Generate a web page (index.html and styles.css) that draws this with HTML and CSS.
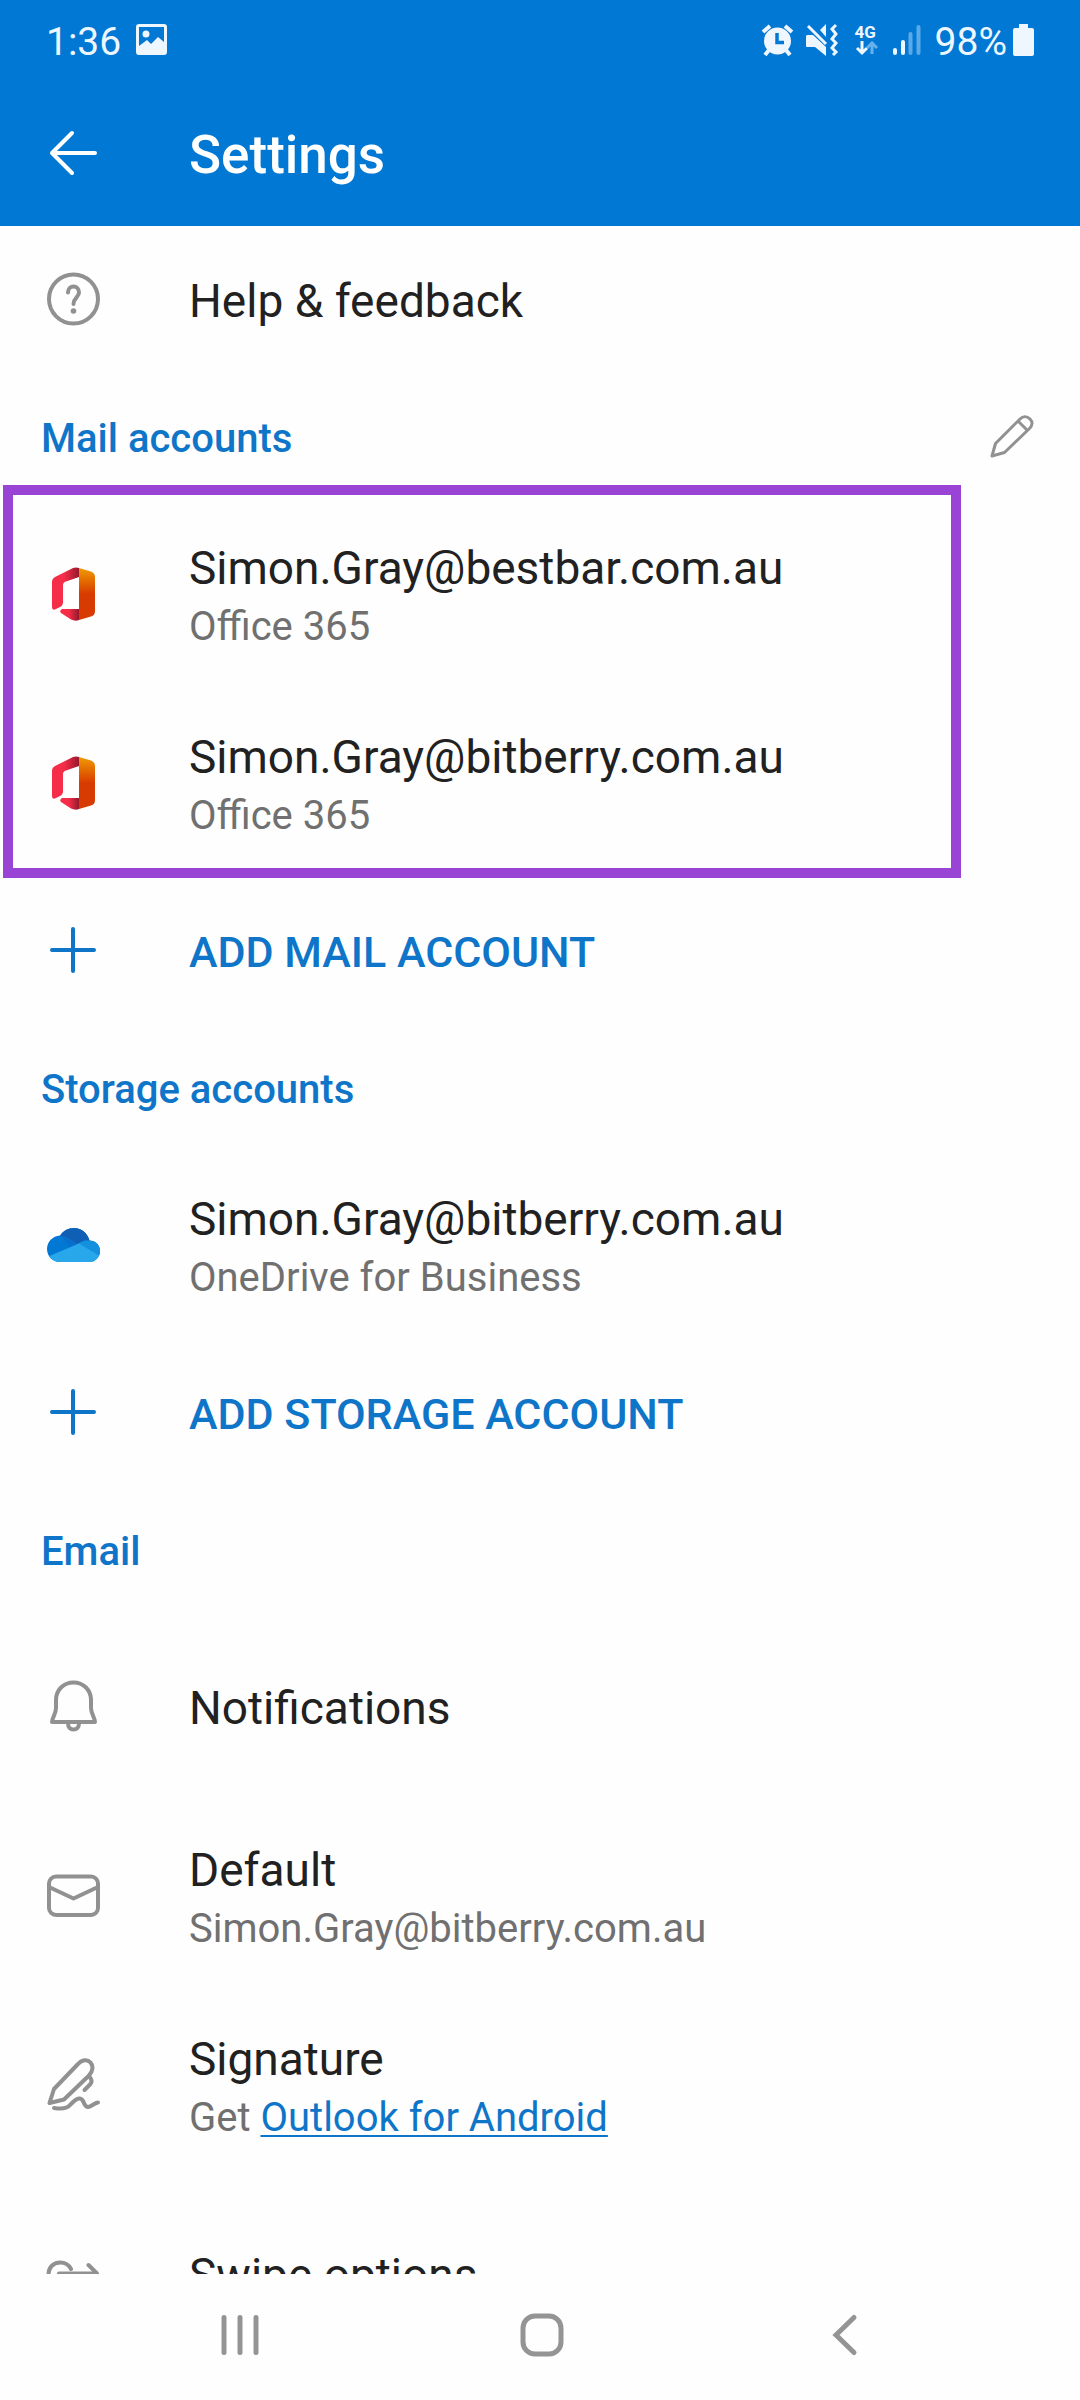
FILE: index.html
```html
<!DOCTYPE html>
<html lang="en">
  <head>
    <meta charset="utf-8">
    <title>Settings</title>
    <link rel="stylesheet" href="styles.css">
  </head>
  <body>
    <header class="header">
      <div class="status">
        <span>1:36</span>
        <svg class="status-picture" width="32" height="32" viewBox="0 0 32 32">
          <path fill="#eef6ff" fill-rule="evenodd" d="M4 0H28Q31 0 31 3V28Q31 31 28 31H3Q0 31 0 28V3Q0 0 3 0ZM3 3V22L11 16L15 20L22 13L28 18V3Z" />
          <circle cx="10" cy="10" r="3.5" fill="#eef6ff" />
        </svg>
        <div class="status-right">
          <svg width="33" height="34" viewBox="0 0 33 34">
            <g stroke="#eef6ff" stroke-width="4" fill="none">
              <path d="M2 9L9 3M24 3L31 9M8 27L4 32M25 27L29 32" />
            </g>
            <circle cx="16.5" cy="18" r="13.5" fill="#eef6ff" />
            <path d="M16 10V19.500H23" fill="none" stroke="#0078d4" stroke-width="3.500" />
          </svg>
          <svg class="status-mute" width="33" height="34" viewBox="0 0 33 34">
            <path fill="#eef6ff" d="M1 12H7L20 24V33L9 24H1Q0 24 0 23V13ZM14 7L20 1V14Z" />
            <path d="M2 3L20 21" stroke="#eef6ff" stroke-width="3" />
            <path d="M30 2L26 6L30 11L26 16L30 20L26 25L30 29L27 32" fill="none" stroke="#eef6ff" stroke-width="3" />
          </svg>
          <div class="network">
            <span>4G</span>
            <svg width="24" height="15" viewBox="0 0 24 15">
              <path d="M7 0V12M2 7L7 12L12 7" fill="none" stroke="#eef6ff" stroke-width="3" />
              <path d="M17 13V1M12 7L17 2L22 7" fill="none" stroke="#66b0ec" stroke-width="3" />
            </svg>
          </div>
          <svg class="status-signal" width="28" height="32" viewBox="0 0 28 32" stroke-width="4" stroke-linecap="round">
            <path d="M2 26V29M10 18V29" stroke="#eef6ff" />
            <path d="M17.500 10V29M25.500 3V29" stroke="#5aa9e8" />
          </svg>
          <span>98%</span>
          <svg class="status-battery" width="21" height="34" viewBox="0 0 21 34">
            <path fill="#eef6ff" d="M6 1H15V5H19Q21 5 21 7V31Q21 33 19 33H2Q0 33 0 31V7Q0 5 2 5H6Z" />
          </svg>
        </div>
      </div>
      <div class="toolbar">
        <button class="back" aria-label="Back">
          <svg class="icon" viewBox="0 0 66 66">
            <path d="M12 33H55M32 13L12 33L32 53" />
          </svg>
        </button>
        <h1>Settings</h1>
      </div>
    </header>

    <main class="content">
      <button class="row short">
        <svg class="icon" viewBox="0 0 66 66">
          <circle cx="33.5" cy="33" r="24.5" />
          <path d="M28 26.500C28 23 30.500 20.500 33.500 20.500S39 23 39 26.500C39 31 33.500 32 33.500 38" />
          <circle class="dot" cx="33.5" cy="45" r="2.8" />
        </svg>
        <span class="single">Help &amp; feedback</span>
      </button>

      <div class="section">
        <h2>Mail accounts</h2>
        <button class="edit" aria-label="Edit mail accounts">
          <svg width="48" height="48" viewBox="0 0 48 48">
            <path d="M4 44L7.500 31.500L32 7C35 4 39 4 42 7S44.500 13.500 41.500 16.500L16.500 40.500ZM30 9L39 18" />
          </svg>
        </button>
      </div>

      <div class="accounts">
        <button class="row">
          <svg class="icon logo" viewBox="0 0 66 66">
            <defs>
              <linearGradient id="orange" x1="0" y1="0" x2="0" y2="1">
                <stop offset="0" stop-color="#f09a00" />
                <stop offset="0.5" stop-color="#d83b01" />
                <stop offset="1" stop-color="#d83b01" />
              </linearGradient>
              <linearGradient id="red" x1="0" y1="0" x2="1" y2="0">
                <stop offset="0.45" stop-color="#f52d48" />
                <stop offset="1" stop-color="#96182c" />
              </linearGradient>
            </defs>
            <g id="office">
              <path fill="url(#red)" d="M39 7Q36 6 33 7L15 16Q12 17.500 12 21V46Q12 50 16 48L20 46Q23 44.500 23 41V24Q23 21.500 26 20.500L39 16Z" />
              <path fill="url(#red)" d="M39 48H22Q19 50 21 52L31 58.500Q35 60.500 39 59Z" />
              <path fill="url(#orange)" d="M39 7L51 10.500Q55 12 55 16V50Q55 54.500 51 55.500L39 59Z" />
            </g>
          </svg>
          <span class="text">
            <span class="title">Simon.Gray@bestbar.com.au</span>
            <span class="sub">Office 365</span>
          </span>
        </button>
        <button class="row">
          <svg class="icon logo" viewBox="0 0 66 66">
            <use href="#office" />
          </svg>
          <span class="text">
            <span class="title">Simon.Gray@bitberry.com.au</span>
            <span class="sub">Office 365</span>
          </span>
        </button>
      </div>

      <button class="row short add">
        <svg class="icon" viewBox="0 0 66 66">
          <path d="M33 12V54M12 33H54" />
        </svg>
        <span class="single">ADD MAIL ACCOUNT</span>
      </button>

      <div class="section">
        <h2>Storage accounts</h2>
      </div>

      <button class="row">
        <svg class="icon logo" viewBox="0 0 66 66">
          <clipPath id="cloud">
            <path d="M20 50C12.500 50 7 44 7 37C7 30 12.500 24 20 23.500C23 19 28 16 34 16C41.500 16 47.500 21 49.500 28.500C55.500 28.500 60 33 60 39C60 45 55.500 50 49.500 50Z" />
          </clipPath>
          <g clip-path="url(#cloud)">
            <path fill="#0078d4" d="M0 10H66V56H0Z" />
            <path fill="#0f5fb5" d="M20 24L26 12H50V29L38 33Q28 24 20 24Z" />
            <path fill="#1068c4" d="M20 23.500Q25 23 29 26L39 32L30 35.500Q24 26 20 23.500Z" opacity="0.5" />
            <path fill="#1490df" d="M36 33Q44 27 50 28.500L66 28V48L38 33Z" />
            <path fill="#28a8ea" d="M7 45L39 31.500L62 45.500V56H7Z" />
          </g>
        </svg>
        <span class="text">
          <span class="title">Simon.Gray@bitberry.com.au</span>
          <span class="sub">OneDrive for Business</span>
        </span>
      </button>

      <button class="row short add">
        <svg class="icon" viewBox="0 0 66 66">
          <path d="M33 12V54M12 33H54" />
        </svg>
        <span class="single">ADD STORAGE ACCOUNT</span>
      </button>

      <div class="section">
        <h2>Email</h2>
      </div>

      <button class="row">
        <svg class="icon" viewBox="0 0 66 66">
          <path d="M33.500 8.500C23.500 8.500 16 16 16 26V34C16 40 12 44 12 48H55C55 44 51 40 51 34V26C51 16 43.500 8.500 33.500 8.500ZM28 49.500C28 53.500 30.500 55.500 33.500 55.500S39 53.500 39 49.500" />
        </svg>
        <span class="single">Notifications</span>
      </button>

      <button class="row">
        <svg class="icon" viewBox="0 0 66 66">
          <rect x="9" y="13.5" width="49" height="38.5" rx="7" />
          <path d="M9 24L33.500 35.500L58 24" />
        </svg>
        <span class="text">
          <span class="title">Default</span>
          <span class="sub">Simon.Gray@bitberry.com.au</span>
        </span>
      </button>

      <div class="row">
        <svg class="icon" viewBox="0 0 66 66">
          <path d="M9.500 51L14 37L38 12C42 7.500 47.500 7 50.500 10.500S53 19.500 49 23.500L24 47.500ZM49.500 24.500L51 27C52 29 51.500 31 50 32.500L44.500 38" />
          <path d="M14 56C28 58 29 54 33 50C37 46 41 45 43 49C45 53 45 55 48 55C51 55 54 51 58 50.500" />
        </svg>
        <span class="text">
          <span class="title">Signature</span>
          <span class="sub">Get <a href="#">Outlook for Android</a></span>
        </span>
      </div>

      <button class="row">
        <svg class="icon" viewBox="0 0 66 66">
          <path d="M8.500 34C8.500 26 13.500 21.500 20 21.500C25 21.500 29 24 31 28M19 32.500H57L48.500 24" />
        </svg>
        <span class="single">Swipe options</span>
      </button>
    </main>

    <nav class="navbar">
      <button aria-label="Recent apps">
        <svg width="48" height="48" viewBox="0 0 48 48">
          <path d="M8 6.500V41.500M24 6.500V41.500M40 6.500V41.500" />
        </svg>
      </button>
      <button aria-label="Home">
        <svg width="48" height="48" viewBox="0 0 48 48">
          <rect x="5" y="5" width="38" height="38" rx="12" />
        </svg>
      </button>
      <button aria-label="Go back">
        <svg width="48" height="48" viewBox="0 0 48 48">
          <path d="M34 6.500L16 24L34 41.500" />
        </svg>
      </button>
    </nav>
  </body>
</html>
```
FILE: styles.css
```css
* {
  box-sizing: border-box;
}
body {
  margin: 0;
  height: 100vh;
  display: flex;
  flex-direction: column;
  background-color: #fefefe;
  color: #212121;
  font-family: Roboto, "Liberation Sans", sans-serif;
}
button {
  border: none;
  padding: 0;
  background: none;
  font-family: inherit;
  color: inherit;
  text-align: left;
  cursor: pointer;
}
svg {
  display: block;
  flex: none;
}
h1,
h2 {
  margin: 0;
  font-weight: 500;
}

/* top bar */
.header {
  flex: none;
  background-color: #0078d4;
  color: #fff;
}
.status {
  display: flex;
  align-items: center;
  height: 80px;
  padding: 0 46px;
  font-size: 39px;
  color: #eef6ff;
}
.status > span,
.status-right > span {
  padding-top: 3px;
}
.status-picture {
  margin-left: 15px;
}
.status-right {
  display: flex;
  align-items: center;
  margin-left: auto;
}
.status-mute {
  margin-left: 12px;
}
.network {
  margin-left: 16px;
  font-size: 17px;
  font-weight: 700;
  line-height: 17px;
}
.status-signal {
  margin: 0 14px;
}
.status-battery {
  margin-left: 6px;
}
.toolbar {
  display: flex;
  align-items: center;
  gap: 83px;
  height: 146px;
  padding: 0 40px;
}
.toolbar h1 {
  padding-top: 3px;
  font-size: 53px;
}

/* settings list */
.content {
  flex: 1;
  min-height: 0;
  overflow-y: auto;
  scrollbar-width: none;
}
.row {
  display: flex;
  align-items: center;
  gap: 83px;
  width: 100%;
  height: 189px;
  padding: 0 40px;
  font-size: 46px;
}
.short {
  height: 146px;
}
.icon {
  width: 66px;
  height: 66px;
  fill: none;
  stroke: #919191;
  stroke-width: 4;
  stroke-linecap: round;
  stroke-linejoin: round;
}
.back .icon {
  stroke: #fff;
}
.logo {
  stroke: none;
}
.dot {
  fill: #919191;
  stroke: none;
}
.text {
  padding-top: 10px;
}
.single {
  padding-top: 3px;
}
.title,
.sub {
  display: block;
}
.title {
  line-height: 56px;
}
.sub {
  font-size: 40px;
  line-height: 62px;
  color: #707070;
}
.sub a {
  color: #0f75c8;
  text-underline-offset: 4px;
  text-decoration-thickness: 2px;
}
.add {
  font-size: 43px;
  font-weight: 500;
  color: #0f75c8;
}
.add .icon {
  stroke: #0f75c8;
}
.section {
  display: flex;
  align-items: center;
  justify-content: space-between;
  height: 127px;
  padding: 0 44px 0 41px;
}
.section h2 {
  padding-top: 5px;
  font-size: 40px;
  color: #0f75c8;
}
.edit svg {
  fill: none;
  stroke: #919191;
  stroke-width: 3;
  stroke-linejoin: round;
}

/* highlight frame over the two mail accounts */
.accounts {
  position: relative;
}
.accounts::after {
  content: "";
  position: absolute;
  top: -14px;
  right: 119px;
  bottom: -1px;
  left: 3px;
  border: 10px solid #9a44d6;
  pointer-events: none;
}

/* system buttons */
.navbar {
  flex: none;
  display: flex;
  height: 126px;
  padding: 0 85px 4px 89px;
}
.navbar button {
  flex: 1;
  display: flex;
  align-items: center;
  justify-content: center;
}
.navbar svg {
  fill: none;
  stroke: #949494;
  stroke-width: 5;
  stroke-linecap: round;
}
```
